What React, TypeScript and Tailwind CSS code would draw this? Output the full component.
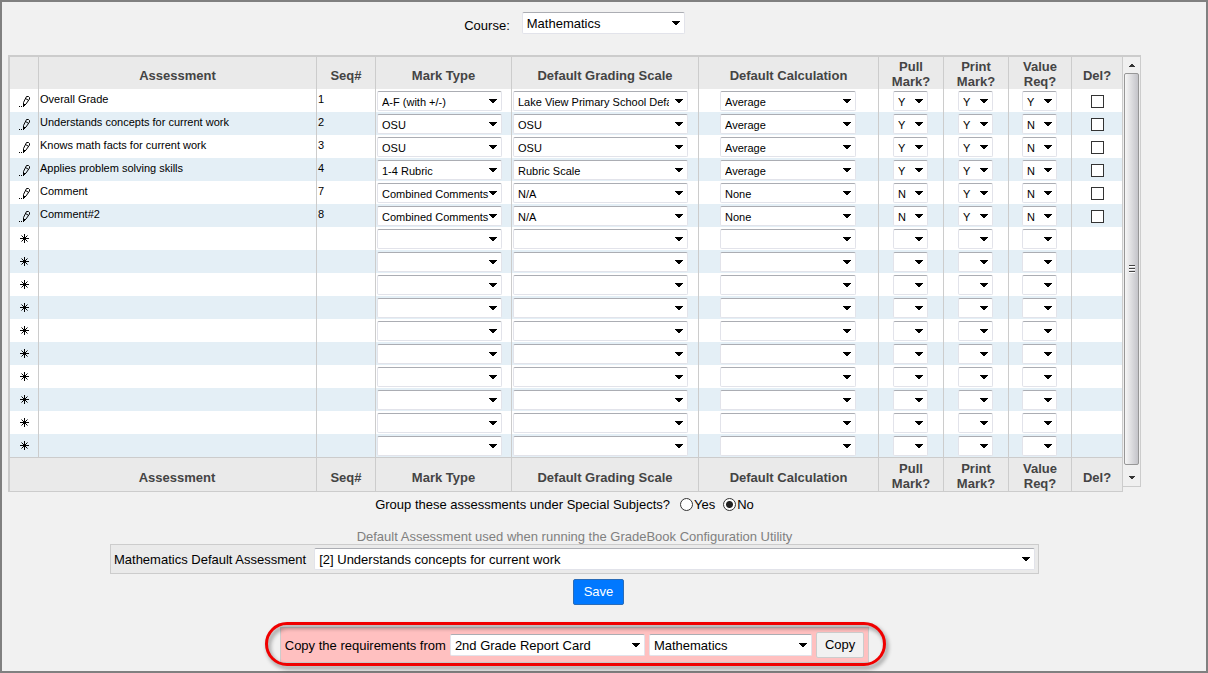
import { useState } from 'react'
import clsx from 'clsx'

interface IAssessment {
  name: string
  seq: string
  markType: string
  scale: string
  calculation: string
  pull: string
  print: string
  value: string
}

const assessments: IAssessment[] = [
  { name: 'Overall Grade', seq: '1', markType: 'A-F (with +/-)', scale: 'Lake View Primary School Default', calculation: 'Average', pull: 'Y', print: 'Y', value: 'Y' },
  { name: 'Understands concepts for current work', seq: '2', markType: 'OSU', scale: 'OSU', calculation: 'Average', pull: 'Y', print: 'Y', value: 'N' },
  { name: 'Knows math facts for current work', seq: '3', markType: 'OSU', scale: 'OSU', calculation: 'Average', pull: 'Y', print: 'Y', value: 'N' },
  { name: 'Applies problem solving skills', seq: '4', markType: '1-4 Rubric', scale: 'Rubric Scale', calculation: 'Average', pull: 'Y', print: 'Y', value: 'N' },
  { name: 'Comment', seq: '7', markType: 'Combined Comments', scale: 'N/A', calculation: 'None', pull: 'N', print: 'Y', value: 'N' },
  { name: 'Comment#2', seq: '8', markType: 'Combined Comments', scale: 'N/A', calculation: 'None', pull: 'N', print: 'Y', value: 'N' },
]

const emptyRow: IAssessment = { name: '', seq: '', markType: '', scale: '', calculation: '', pull: '', print: '', value: '' }
const rows = [...assessments, ...Array.from({ length: 10 }, () => emptyRow)]

interface DropDownProps {
  value: string
  label?: string
  id?: string
  small?: boolean
  className?: string
  padClass?: string
}

function DropDown({ value, label, id, small, className, padClass = 'pr-[18px]' }: DropDownProps) {
  return (
    <span className={clsx('relative block', className)}>
      <select
        id={id}
        aria-label={label}
        defaultValue={value}
        className={clsx(
          'block w-full appearance-none rounded-xs border border-[#e2e3ea] border-t-[#abadb3] bg-white pl-1 text-black',
          small ? 'h-5 pb-0.5 text-[11px]' : 'h-[22px] pt-px text-[13px]',
          padClass
        )}
      >
        <option>{value}</option>
      </select>
      <svg className="pointer-events-none absolute right-[5px] top-1/2 -mt-0.5" width="8" height="4" viewBox="0 0 8 4" shapeRendering="crispEdges">
        <path d="M0 0h8v1H0zM1 1h6v1H1zM2 2h4v1H2zM3 3h2v1H3z" />
      </svg>
    </span>
  )
}

function PencilIcon() {
  return (
    <svg width="11" height="11" viewBox="0 0 11 11" fill="none" stroke="#000">
      <path d="M7.5.5h2l1 1v1.5L7 8 4.5 10.5V6.5z" />
      <path d="M6.5 2.5l2.5 1.5" />
      <path d="M4 8h2v1H5v2H4z" fill="#000" stroke="none" />
      <path d="M0 10.5h1M2 10.5h1" />
    </svg>
  )
}

function StarIcon() {
  return (
    <svg width="9" height="9" viewBox="0 0 9 9" stroke="#000">
      <path d="M4.5 0v9M0 4.5h9M1.5 1.5l6 6M7.5 1.5l-6 6" />
    </svg>
  )
}

function HeadCells({ cellClass }: { cellClass: string }) {
  const single = clsx(cellClass, 'pt-1.5 leading-4')
  const double = clsx(cellClass, 'pt-0.5 leading-[15px]')
  return (
    <>
      <th className={single}>Seq#</th>
      <th className={single}>Mark Type</th>
      <th className={single}>Default Grading Scale</th>
      <th className={single}>Default Calculation</th>
      <th className={double}>Pull<br />Mark?</th>
      <th className={double}>Print<br />Mark?</th>
      <th className={double}>Value<br />Req?</th>
      <th className={single}>Del?</th>
    </>
  )
}

function ScrollBar() {
  return (
    <div aria-hidden="true" className="mb-[5px] flex w-[18px] flex-none flex-col items-center border-b border-r border-t-2 border-[#ccc] bg-[#f0f0f0]">
      <div className="flex h-4 items-center">
        <svg width="6" height="3" viewBox="0 0 6 3" shapeRendering="crispEdges">
          <path d="M2 0h2v1H2zM1 1h4v1H1zM0 2h6v1H0z" fill="#333" />
        </svg>
      </div>
      <div className="flex w-[15px] flex-1 flex-col items-center justify-center gap-px rounded-xs border border-[#979797] bg-linear-to-r from-[#f6f6f6] to-[#c4c4c9]">
        <span className="h-0.5 w-1.5 border-t border-[#444] bg-white" />
        <span className="h-0.5 w-1.5 border-t border-[#444] bg-white" />
        <span className="h-0.5 w-1.5 border-t border-[#444] bg-white" />
      </div>
      <div className="flex h-[21px] items-center pt-1">
        <svg width="6" height="3" viewBox="0 0 6 3" shapeRendering="crispEdges">
          <path d="M0 0h6v1H0zM1 1h4v1H1zM2 2h2v1H2z" fill="#333" />
        </svg>
      </div>
    </div>
  )
}

interface RadioProps {
  text: string
  checked: boolean
  onChange: () => void
}

function Radio({ text, checked, onChange }: RadioProps) {
  return (
    <label className="flex items-center gap-px">
      <input
        type="radio"
        name="group"
        checked={checked}
        onChange={onChange}
        className="-mt-0.5 size-[13px] appearance-none rounded-full border border-[#333] bg-white checked:bg-[radial-gradient(circle,#222_3px,#fff_4px)]"
      />
      {text}
    </label>
  )
}

const headCell = 'h-8 border-r border-[#ccc] p-0'
const footCell = 'h-[35px] border-r border-b border-t border-[#ccc] p-0'
const bodyCell = 'h-[23px] border-r border-[#ccc] p-0 align-top'
const centerCell = clsx(bodyCell, 'pr-px')

export default function App() {
  const [grouped, setGrouped] = useState(false)

  return (
    <div className="min-h-screen border-2 border-[#808080] bg-[#f1f1f1] pl-1.5 pr-[65px] font-['Liberation_Sans',Arial,sans-serif] text-[13px] leading-4 text-black">
      <div className="flex items-center justify-center gap-3 pt-2.5">
        <label htmlFor="course" className="pt-1.5">Course:</label>
        <DropDown id="course" value="Mathematics" className="w-[163px]" />
      </div>

      <div className="mt-[21px] flex">
        <table className="min-w-0 flex-1 table-fixed border-separate border-spacing-0 border-l-2 border-t-2 border-[#ccc]">
          <colgroup>
            <col className="w-[29px]" />
            <col />
            <col className="w-[59px]" />
            <col className="w-[136px]" />
            <col className="w-[187px]" />
            <col className="w-[180px]" />
            <col className="w-[65px]" />
            <col className="w-[65px]" />
            <col className="w-[63px]" />
            <col className="w-[51px]" />
          </colgroup>
          <thead className="bg-[#eaeaea] text-[#444]">
            <tr>
              <td className={headCell} />
              <th className={clsx(headCell, 'pt-1.5')}>Assessment</th>
              <HeadCells cellClass={headCell} />
            </tr>
          </thead>
          <tbody className="text-[11px] leading-5">
            {rows.map((row, i) => (
              <tr key={i} className="bg-white even:bg-[#e4eff6]">
                <td className="h-[23px] border-r border-[#ccc] p-0">
                  <div className="flex justify-center pl-px">
                    {row.name ? (
                      <button type="button" aria-label={`Edit ${row.name}`} className="pt-0.5">
                        <PencilIcon />
                      </button>
                    ) : (
                      <StarIcon />
                    )}
                  </div>
                </td>
                <td className={clsx(bodyCell, 'pl-px')}>{row.name}</td>
                <td className={clsx(bodyCell, 'pl-px')}>{row.seq}</td>
                <td className={bodyCell}>
                  <DropDown small label="Mark Type" value={row.markType} className="ml-px mt-0.5 w-[125px]" padClass="pr-3" />
                </td>
                <td className={bodyCell}>
                  <DropDown small label="Default Grading Scale" value={row.scale} className="ml-px mt-0.5 w-[175px]" />
                </td>
                <td className={centerCell}>
                  <DropDown small label="Default Calculation" value={row.calculation} className="mx-auto mt-0.5 w-[136px]" />
                </td>
                <td className={centerCell}>
                  <DropDown small label="Pull Mark?" value={row.pull} className="mx-auto mt-0.5 w-[35px]" />
                </td>
                <td className={centerCell}>
                  <DropDown small label="Print Mark?" value={row.print} className="mx-auto mt-0.5 w-[35px]" />
                </td>
                <td className={centerCell}>
                  <DropDown small label="Value Req?" value={row.value} className="mx-auto mt-0.5 w-[35px]" />
                </td>
                <td className={bodyCell}>
                  {row.name && (
                    <input
                      type="checkbox"
                      aria-label={`Delete ${row.name}`}
                      className="mx-auto mt-1.5 block size-[13px] appearance-none border border-[#333] bg-white checked:bg-[#333]"
                    />
                  )}
                </td>
              </tr>
            ))}
          </tbody>
          <tfoot className="bg-[#eaeaea] text-[#444]">
            <tr>
              <th colSpan={2} className={clsx(footCell, 'pl-7 pt-1.5')}>Assessment</th>
              <HeadCells cellClass={footCell} />
            </tr>
          </tfoot>
        </table>
        <ScrollBar />
      </div>

      <div role="radiogroup" aria-labelledby="group-label" className="flex items-center justify-center gap-2 pr-5 pt-[5px]">
        <span id="group-label" className="mr-0.5">Group these assessments under Special Subjects?</span>
        <Radio text="Yes" checked={grouped} onChange={() => setGrouped(true)} />
        <Radio text="No" checked={!grouped} onChange={() => setGrouped(false)} />
      </div>

      <p className="mt-4 text-center text-[#808080]">Default Assessment used when running the GradeBook Configuration Utility</p>
      <div className="mx-auto -mt-px flex w-[82%] items-center gap-2 border border-[#ccc] bg-[#eaeaea] p-[3px]">
        <label htmlFor="default-assessment" className="pt-0.5">Mathematics Default Assessment</label>
        <DropDown id="default-assessment" value="[2] Understands concepts for current work" className="flex-1" />
      </div>

      <div className="mt-[5px] flex justify-center pl-12">
        <button type="button" className="h-[26px] rounded-xs border border-[#2a6cb8] bg-[#0078ff] px-2.5 text-white">Save</button>
      </div>

      <div className="mt-[22px] flex justify-center pb-2">
        <div className="relative flex items-center gap-1 border border-[#ccc] bg-[#ffc0c0] p-1">
          <label htmlFor="copy-card" className="pt-0.5">Copy the requirements from</label>
          <DropDown id="copy-card" value="2nd Grade Report Card" className="w-[195px]" />
          <DropDown label="Course to copy" value="Mathematics" className="w-[163px]" />
          <button type="button" className="h-[26px] rounded-xs border border-[#ccc] bg-[#f1f1f1] px-2">Copy</button>
          <div className="pointer-events-none absolute -bottom-1 -left-4 -right-[18px] -top-1.5 rounded-full border-3 border-[#f00000] drop-shadow-[2px_3px_2px_rgba(0,0,0,0.45)]" />
        </div>
      </div>
    </div>
  )
}
